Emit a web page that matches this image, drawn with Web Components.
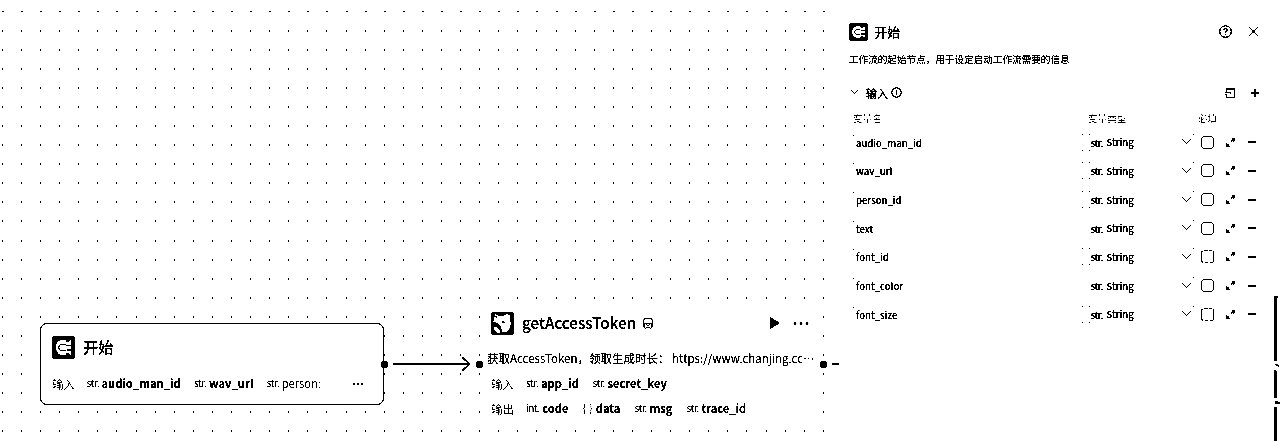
<!DOCTYPE html>
<html lang="zh-CN"><head><meta charset="utf-8"><title>开始</title>
<style>html,body{margin:0;background:#fff}body{width:1280px;height:441px;overflow:hidden}</style></head>
<body><workflow-app></workflow-app>
<script>
const START = `<svg viewBox="0 0 24 24" width="100%" height="100%" style="display:block"><rect width="24" height="24" rx="3.5" fill="#000"/><path d="M11.500 4H16l1 2 3-2v16l-3-2-1 2h-4.500C7 20 4 16.500 4 12s3-8 7.500-8z" fill="#fff"/><path d="M14.500 8.500H10.500a3.500 3.500 0 0 0 0 7h4" fill="none" stroke="#000" stroke-width=".9"/><path d="M15 9.500h5v1.200h-5zM15 14h5v1.200h-5zM14 4h3v2.500h-2zM14 20h3v-2.500h-2z"/></svg>`;
const def = (name, html) => customElements.define(name, class extends HTMLElement {
  constructor(){ super(); this.attachShadow({mode:'open'}); }
  connectedCallback(){ this.shadowRoot.innerHTML = typeof html === 'function' ? html(this) : html; }
});

def('dot-canvas', () => {
  let d = '';
  for (let r=0;r<23;r++) for (let c=0;c<44;c++) {
    const x = Math.round(1.9 + c*19.09), y = Math.round(11 + r*19.08 - .4);
    d += r ? `M${x} ${y}h1v2h-1z` : `M${x} ${y}h2v1h-2z`;
  }
  return `<style>:host{display:block;position:relative;width:1280px;height:441px}svg{display:block}.over{position:absolute;left:0;top:0;z-index:2;pointer-events:none}</style>
  <svg width="1280" height="441"><path d="${d}" shape-rendering="crispEdges"/>
  <path d="M1274 296h4v2h-1v63h-3zM1275 364l4 1v2l-4-2v-1zM1274 370h2l1 4v24h-3zM1275 401l5 1v2h-5zM1274 407h3v34h-3z"/></svg><slot></slot>
  <svg class="over" width="1280" height="441"><path d="M393 364H469M462.500 357.500L469.500 364L462.500 370.500M832 364h7" fill="none" stroke="#000" stroke-width="1.700"/></svg>`;
});

def('var-tag', el => `<style>:host{display:flex;align-items:baseline;white-space:nowrap;font-size:11.200px;line-height:16px;font-weight:600}
  i{font-style:normal;font-weight:400;font-size:10px;letter-spacing:-.45px;margin-right:2.500px;position:relative;top:-1px;color:#222}
  :host([type="{ }"]) i{letter-spacing:.6px}
  :host([faint]){font-weight:400}:host([faint]) b{color:#444}b{font-weight:inherit}</style><i>${el.getAttribute('type')}</i><b><slot></slot></b>`);

def('port-dot', `<style>:host{position:absolute;width:7px;height:7px;border-radius:50%;background:#000}</style>`);

def('start-node', `<style>
 :host{position:absolute;left:40px;top:323px;width:344px;height:82px;box-sizing:border-box;border:1px solid #000;border-radius:7px;background:#fff;padding:11px 11px 0}
 .h{display:flex;align-items:center;gap:8px;height:24px;font-size:15.300px;font-weight:500}.h span{margin-top:-2px}.i{width:23px;height:23px}
 .r{display:flex;align-items:center;margin-top:16px;height:17px}.l{width:34.500px;font-size:11.500px;color:#606060}
 var-tag{margin-right:13.300px}.more{margin-left:auto;font-size:12px;font-weight:700;margin-right:8px}
 port-dot{right:-5px;top:37px}</style>
 <div class="h"><div class="i">${START}</div><span>开始</span></div>
 <div class="r"><span class="l">输入</span><var-tag type="str.">audio_man_id</var-tag><var-tag type="str.">wav_url</var-tag><var-tag type="str." faint>person:</var-tag><span class="more">…</span></div><port-dot></port-dot>`);

def('token-node', `<style>
 :host{position:absolute;left:480px;top:305px;width:343px;height:119px;background:#fff;box-sizing:border-box;padding:6px 14px 0 11px}
 .h{display:flex;align-items:center;height:24px;font-size:15.200px;font-weight:500}.h svg{display:block}.h span{margin:-2px 6px 0 8px}
 .run{margin-left:auto}.m{margin-left:13px}
 p{margin:15px 0 0 -4px;font-size:11.500px;line-height:17px;white-space:nowrap}
 .r{display:flex;align-items:center;height:17px;margin-top:8px}.l{width:35px;font-size:11.500px;color:#606060}
 var-tag{margin-right:13.500px}.r.o var-tag{margin-right:14px}port-dot.a{left:-4px;top:56px}port-dot.b{right:-4px;top:56px}</style>
 <div class="h"><svg width="23" height="23" viewBox="0 0 23 23"><rect width="23" height="23" rx="3"/><path fill="#fff" d="M4 2l3 1 1 1h4l4-2 3 1v6l1 2-1 5-3 4h-5l-1-5-4-4-4-1 1-3zM3 15h3l3 3v3H6l-3-3z"/><path d="M11 9h2v1h1v1h-3zM4 4l3 1-2 1z"/></svg><span>getAccessToken</span>
 <svg width="12" height="13" viewBox="0 0 12 13" fill="none" stroke="#000" stroke-width=".9"><path d="M2.500 1.500h7l1 2.500-.5 2.500H2L1.500 4zM2 6.500v4l1.500 1 1.500-1h2l1.500 1 1.500-1v-4M4.500 7.500L6 9l1.500-1.500"/></svg>
 <svg class="run" width="10" height="12"><path d="M0 0L10 6L0 12z"/></svg><svg class="m" width="16" height="4"><circle cx="2" cy="2" r="1.500"/><circle cx="8" cy="2" r="1.500"/><circle cx="14" cy="2" r="1.500"/></svg></div>
 <p>获取AccessToken，领取生成时长： https://www.chanjing.cc…</p>
 <div class="r"><span class="l">输入</span><var-tag type="str.">app_id</var-tag><var-tag type="str.">secret_key</var-tag></div>
 <div class="r o"><span class="l">输出</span><var-tag type="int.">code</var-tag><var-tag type="{ }">data</var-tag><var-tag type="str.">msg</var-tag><var-tag type="str.">trace_id</var-tag></div>
 <port-dot class="a"></port-dot><port-dot class="b"></port-dot>`);

def('var-row', `<style>
 :host{display:grid;grid-template-columns:229px 112px 1fr;height:28.650px;align-items:center;font-size:9.500px;font-weight:500}
 .n{padding-left:3px;height:15px;line-height:16px;background:linear-gradient(#000,#000) 0 0/1px 1px no-repeat}
 .s{display:flex;align-items:center;height:17px;line-height:17px;padding-left:8.500px;
  background:linear-gradient(#000,#000) 0 0/1px 1px no-repeat,linear-gradient(#000,#000) 7px 0/1px 1px no-repeat,linear-gradient(#000,#000) 0 100%/1px 1px no-repeat,linear-gradient(#000,#000) 7px 100%/1px 1px no-repeat,linear-gradient(#000,#000) 100% 0/1px 1px no-repeat}
 :host([plain]) .s{background:linear-gradient(#000,#000) 100% 0/1px 1px no-repeat}
 .s i{font-style:normal;letter-spacing:-.6px;font-size:10px}.s span{margin-left:3.500px;padding-top:1px}.s svg{margin-left:auto;margin-right:3.500px}
 .a{display:flex;align-items:center}.a .c{box-sizing:border-box;margin-left:7px;width:13px;height:13px;border:1px solid #000;border-radius:3.500px}.a svg{display:block}
 :host([dash]) .c{border-top-style:dashed;border-bottom-style:dashed}</style>
 <div class="n"><slot></slot></div><div class="s"><i>str.</i><span>String</span><svg width="9" height="6" fill="none" stroke="#000" stroke-width="1"><path d="M.5.5L4.500 4.500L8.500.5"/></svg></div>
 <div class="a"><div class="c"></div><svg style="margin-left:12px" width="9" height="9" shape-rendering="crispEdges"><path d="M6 0h3v3H8v1H7V3H6v1H5V2h1zM0 5h1v1h2v2h1v1H0z"/></svg><svg style="margin-left:13px" width="8" height="2"><path d="M0 0h8v1.600H0z"/></svg></div>`);

def('node-panel', `<style>
 :host{position:absolute;left:830px;top:0;width:441px;height:441px;box-sizing:border-box;padding:21px 11px 0 19px;background:#fff}
 svg{display:block}.h{display:flex;align-items:center;height:20px;font-size:12.700px;font-weight:500}.i{width:19px;height:18px;margin-right:6.500px;margin-top:1px}
 .sp{flex:1}p{margin:10px 0 0;font-size:9.600px;line-height:16px;white-space:nowrap}
 .t{display:flex;align-items:center;height:18px;margin-top:17px;font-size:11.100px;font-weight:500}
 .t svg{position:relative;top:-.5px}
 .c{display:grid;grid-template-columns:235px 111px 1fr;height:16px;line-height:16px;margin-top:8px;padding-left:4px;font-size:9.570px;color:#747474;margin-bottom:2px}
 .c span:last-child{margin-left:-1px}
 var-row{margin-left:4px;margin-right:-2px}</style>
 <div class="h"><div class="i">${START.replace('viewBox="0 0 24 24"','viewBox="0 0 24 24" preserveAspectRatio="none"')}</div>开始<span class="sp"></span>
 <svg width="13" height="13" viewBox="0 0 13 13" fill="none" stroke="#000" stroke-width="1.100"><circle cx="6.500" cy="6.500" r="5.800"/><path d="M4.800 5q0-1.500 1.700-1.500T8.200 5Q8.200 6 6.500 6.800V8M6.500 8.800V10"/></svg>
 <svg style="margin:1px 2px 0 17px" width="9" height="9" stroke="#000" stroke-width="1.050"><path d="M0 0L9 9M9 0L0 9"/></svg></div>
 <p>工作流的起始节点，用于设定启动工作流需要的信息</p>
 <div class="t"><svg style="margin:0 8px 0 2px" width="7" height="5" fill="none" stroke="#000" stroke-width="1"><path d="M.5.5l3 3 3-3"/></svg>输入
 <svg style="margin-left:3px;top:-1px" width="11" height="11" fill="none" stroke="#000"><circle cx="5.500" cy="5.500" r="4.800"/><path d="M5.500 4.500V8M5.500 3v1" /></svg><span class="sp"></span>
 <svg style="top:0" width="10" height="10" fill="none" stroke="#000" stroke-width="1" shape-rendering="crispEdges"><path d="M1.500 4V.5h8v9h-8V7M0 4.500h6M0 6.500h2M5.500 3.500v2M1 1.500h9"/></svg><svg style="margin:0 1px 0 16px" width="8" height="8" stroke="#000" stroke-width="1.400"><path d="M4 0v8M0 4h8" stroke-width="1.300"/></svg></div>
 <div class="c"><span>变量名</span><span>变量类型</span><span>必填</span></div>
 <var-row>audio_man_id</var-row><var-row>wav_url</var-row><var-row>person_id</var-row><var-row plain>text</var-row><var-row dash>font_id</var-row><var-row plain>font_color</var-row><var-row dash>font_size</var-row>`);

def('workflow-app', `<style>:host{display:block;position:relative;width:1280px;height:441px;overflow:hidden;background:#fff;color:#000;font-family:"Noto Sans CJK SC",sans-serif;filter:grayscale(1) brightness(.78) contrast(30)}</style>
 <dot-canvas><start-node></start-node><token-node></token-node><node-panel></node-panel></dot-canvas>`);
</script></body></html>
